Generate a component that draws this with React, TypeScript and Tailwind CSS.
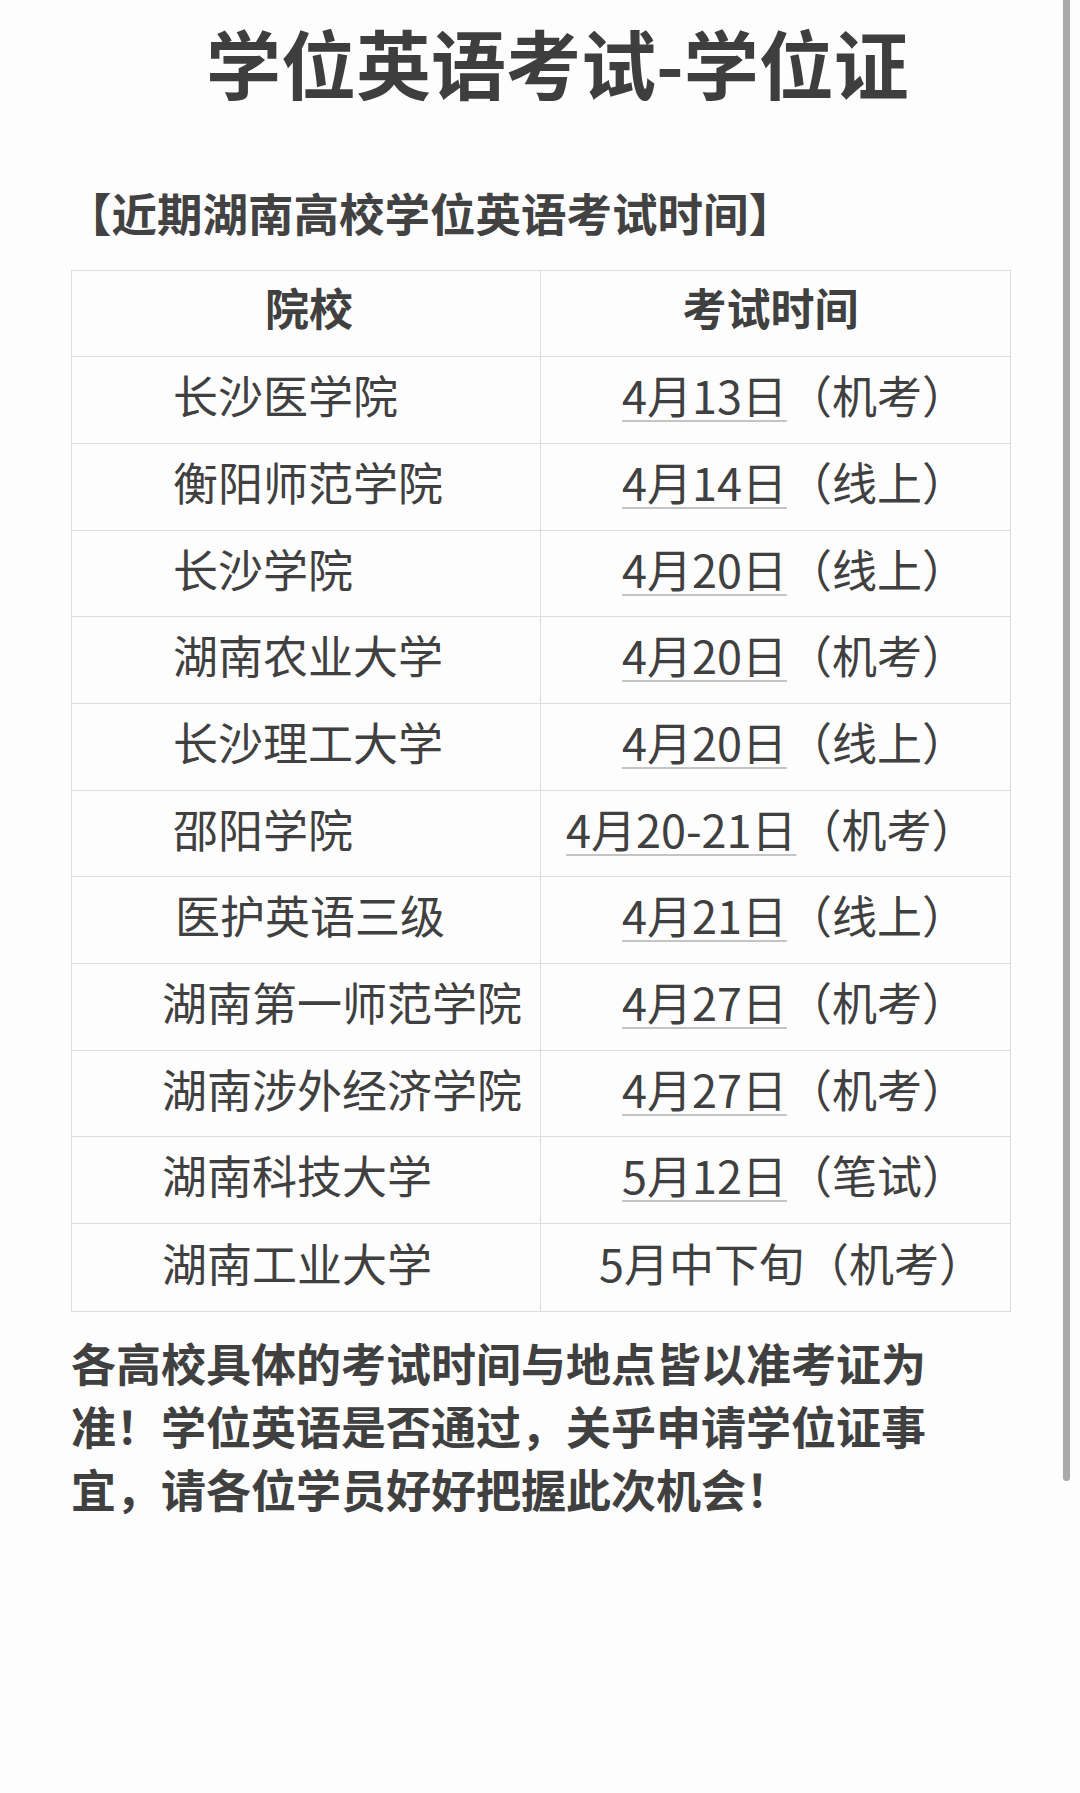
const font = { fontFamily: '"Noto Sans CJK SC", "Noto Sans", sans-serif' }

interface Row {
  school: string
  date: string
  mode: string
  schoolPad: string
  datePad: string
}

const rows: Row[] = [
  { school: "长沙医学院", date: "4月13日", mode: "（机考）", schoolPad: "pl-[101px]", datePad: "pl-[81px]" },
  { school: "衡阳师范学院", date: "4月14日", mode: "（线上）", schoolPad: "pl-[101px]", datePad: "pl-[81px]" },
  { school: "长沙学院", date: "4月20日", mode: "（线上）", schoolPad: "pl-[101px]", datePad: "pl-[81px]" },
  { school: "湖南农业大学", date: "4月20日", mode: "（机考）", schoolPad: "pl-[101px]", datePad: "pl-[81px]" },
  { school: "长沙理工大学", date: "4月20日", mode: "（线上）", schoolPad: "pl-[101px]", datePad: "pl-[81px]" },
  { school: "邵阳学院", date: "4月20-21日", mode: "（机考）", schoolPad: "pl-[101px]", datePad: "pl-[25px]" },
  { school: "医护英语三级", date: "4月21日", mode: "（线上）", schoolPad: "pl-[103px]", datePad: "pl-[81px]" },
  { school: "湖南第一师范学院", date: "4月27日", mode: "（机考）", schoolPad: "pl-[90px]", datePad: "pl-[81px]" },
  { school: "湖南涉外经济学院", date: "4月27日", mode: "（机考）", schoolPad: "pl-[90px]", datePad: "pl-[81px]" },
  { school: "湖南科技大学", date: "5月12日", mode: "（笔试）", schoolPad: "pl-[90px]", datePad: "pl-[81px]" },
]

export default function App() {
  return (
    <div className="relative min-h-[1793px] w-[1080px] bg-[#fdfdfd] text-[#404040]" style={font}>
      {/* scrollbar */}
      <div className="absolute right-[10px] top-0 h-[1481px] w-[7px] rounded-b-full bg-[#a9a9a9]" />

      <h1 className="pl-[206px] pt-[24px] text-[75px] font-bold leading-none text-[#3e3e3e]">
        学位英语考试-学位证
      </h1>

      <p className="mt-[91px] pl-[66px] text-[45.5px] font-bold leading-none text-[#424242]">
        【近期湖南高校学位英语考试时间】
      </p>

      <div className="ml-[71px] mt-[34px] w-[940px] border border-[#dcdcdc]">
        <div className="grid h-[86.7px] grid-cols-2 border-b border-[#dcdcdc] text-[44px] font-bold">
          <div className="flex items-center justify-center border-r border-[#dcdcdc] pb-[12px] pl-[6px]">院校</div>
          <div className="flex items-center justify-center pb-[12px] pr-[10px]">考试时间</div>
        </div>
        {rows.map((r) => (
          <div key={r.school} className="grid h-[86.7px] grid-cols-2 border-b border-[#dcdcdc] text-[45px]">
            <div className={`flex items-center border-r border-[#dcdcdc] pb-[10px] ${r.schoolPad}`}>{r.school}</div>
            <div className={`flex items-center whitespace-nowrap pb-[10px] ${r.datePad}`}>
              <span className="underline decoration-[#c4c4c4] decoration-2 underline-offset-[6px]">{r.date}</span>
              <span>{r.mode}</span>
            </div>
          </div>
        ))}
        <div className="grid h-[86.7px] grid-cols-2 text-[45px]">
          <div className="flex items-center border-r border-[#dcdcdc] pb-[10px] pl-[90px]">湖南工业大学</div>
          <div className="flex items-center whitespace-nowrap pb-[10px] pl-[58px]">5月中下旬（机考）</div>
        </div>
      </div>

      <p className="ml-[71px] mt-[19px] w-[870px] text-[45px] font-bold leading-[63px] text-[#404040]">
        各高校具体的考试时间与地点皆以准考证为准！学位英语是否通过，关乎申请学位证事宜，请各位学员好好把握此次机会！
      </p>
    </div>
  )
}
